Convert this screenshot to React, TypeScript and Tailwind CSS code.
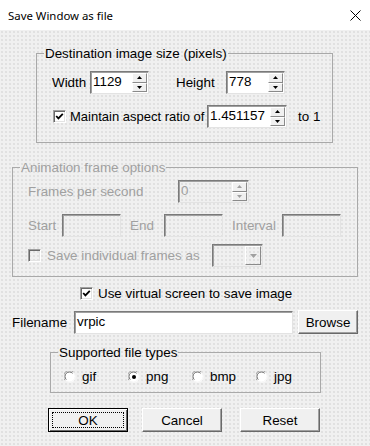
import type { ReactNode } from 'react'

const sunken =
  'border border-t-[#7a7a7a] border-l-[#7a7a7a] border-r-[#e3e3e3] border-b-[#e3e3e3] shadow-[inset_1px_1px_0_#a0a0a0]'

function SpinButton({ up, disabled }: { up?: boolean; disabled?: boolean }) {
  return (
    <div className="flex-1 flex items-center justify-center bg-[#f0f0f0] border border-t-white border-l-white border-r-[#8a8a8a] border-b-[#8a8a8a]">
      <svg width="5" height="3" viewBox="0 0 5 3">
        <path
          d={up ? 'M2.5 0 L5 3 L0 3 Z' : 'M0 0 L5 0 L2.5 3 Z'}
          fill={disabled ? '#a0a0a0' : '#000'}
        />
      </svg>
    </div>
  )
}

function SpinBox({ value, className, disabled }: { value: string; className: string; disabled?: boolean }) {
  return (
    <div className={`flex shrink-0 h-[23px] ${sunken} ${disabled ? '' : 'bg-white'} ${className}`}>
      <span className={`flex-1 pl-[2px] pt-[2px] leading-[16px] ${disabled ? 'text-[#a0a0a0]' : 'text-black'}`}>
        {value}
      </span>
      <div className="flex flex-col w-[16px] py-[1px] pr-[1px]">
        <SpinButton up disabled={disabled} />
        <SpinButton disabled={disabled} />
      </div>
    </div>
  )
}

function TextBox({ value, className, disabled }: { value?: string; className: string; disabled?: boolean }) {
  return (
    <div className={`flex shrink-0 items-center h-[23px] ${sunken} ${disabled ? '' : 'bg-white'} ${className}`}>
      <span className="pl-[2px] leading-[16px] text-black">{value}</span>
    </div>
  )
}

function Checkbox({ checked, disabled }: { checked?: boolean; disabled?: boolean }) {
  return (
    <div
      className={`w-[13px] h-[13px] shrink-0 flex items-center justify-center ${
        disabled ? 'bg-transparent' : 'bg-white'
      } border border-t-[#a0a0a0] border-l-[#a0a0a0] border-r-white border-b-white shadow-[inset_1px_1px_0_#696969,inset_-1px_-1px_0_#e3e3e3]`}
    >
      {checked && (
        <svg width="9" height="9" viewBox="0 0 9 9">
          <polyline points="1.2,4 3.4,6.4 7.8,1.8" fill="none" stroke="#000" strokeWidth="1.8" />
        </svg>
      )}
    </div>
  )
}

function Radio({ checked }: { checked?: boolean }) {
  return (
    <svg width="12" height="12" viewBox="0 0 12 12" className="shrink-0">
      <circle cx="6" cy="6" r="5.5" fill="#fff" />
      <path d="M1.2 9.4 A5.2 5.2 0 0 1 9.4 1.2" fill="none" stroke="#a0a0a0" strokeWidth="1" />
      <path d="M2.3 8.6 A4.2 4.2 0 0 1 8.6 2.3" fill="none" stroke="#696969" strokeWidth="1" />
      <path d="M9.4 1.2 A5.2 5.2 0 0 1 1.2 9.4" fill="none" stroke="#f4f4f4" strokeWidth="1" />
      {checked && <circle cx="6" cy="6" r="2" fill="#000" />}
    </svg>
  )
}

function Button({ children, className, isDefault }: { children: ReactNode; className: string; isDefault?: boolean }) {
  if (isDefault) {
    return (
      <div className={`h-[24px] shrink-0 flex p-[3px] bg-[#f0f0f0] border border-black shadow-[inset_1px_1px_0_#fff,inset_-1px_-1px_0_#696969] ${className}`}>
        <div className="flex-1 flex items-center justify-center border border-dotted border-black">{children}</div>
      </div>
    )
  }
  return (
    <div
      className={`h-[24px] shrink-0 flex items-center justify-center bg-[#f0f0f0] border border-t-white border-l-white border-r-[#696969] border-b-[#696969] shadow-[inset_-1px_-1px_0_#a0a0a0] ${className}`}
    >
      {children}
    </div>
  )
}

function Group({ label, disabled, className, children }: { label: string; disabled?: boolean; className: string; children: ReactNode }) {
  return (
    <fieldset className={`border border-[#a9a9a9] ${className}`}>
      <legend className={`ml-[7px] px-[1px] leading-[15px] ${disabled ? 'text-[#a0a0a0]' : 'text-black'}`}>{label}</legend>
      {children}
    </fieldset>
  )
}

export default function App() {
  return (
    <div className="w-[370px] h-[446px] flex flex-col whitespace-nowrap text-[13.4px] leading-[15px] font-['Liberation_Sans',Arial,sans-serif] text-black">
      <div className="h-[30px] flex items-center justify-between bg-white pl-[8px] pr-[9px] font-['Noto_Sans','Open_Sans',sans-serif] text-[11.4px]">
        <span>Save Window as file</span>
        <svg width="11" height="11" viewBox="0 0 11 11">
          <path d="M0.5 0.5 L10.5 10.5 M10.5 0.5 L0.5 10.5" stroke="#000" strokeWidth="1" />
        </svg>
      </div>

      <div className="flex-1 flex flex-col bg-[#f0f0f0] bg-[image:radial-gradient(circle,#e0e0e0_0.7px,transparent_1px)] bg-[length:4px_4px]">
        <Group label="Destination image size (pixels)" className="ml-[36px] mt-[16px] w-[297px] h-[97px]">
          <div className="flex items-center mt-[10px] pl-[15px]">
            <span className="w-[38px] shrink-0">Width</span>
            <SpinBox value="1129" className="w-[59px]" />
            <span className="w-[50px] shrink-0 ml-[27px]">Height</span>
            <SpinBox value="778" className="w-[59px]" />
          </div>
          <div className="flex items-center mt-[11px] pl-[16px]">
            <Checkbox checked />
            <span className="w-[141px] shrink-0 pl-[4px] text-[13px]">Maintain aspect ratio of</span>
            <SpinBox value="1.451157" className="w-[80px]" />
            <span className="ml-[11px]">to 1</span>
          </div>
        </Group>

        <Group label="Animation frame options" disabled className="ml-[12px] mt-[17px] w-[346px] h-[117px] text-[#a0a0a0]">
          <div className="flex items-center mt-[5px] pl-[15px]">
            <span className="w-[150px] shrink-0">Frames per second</span>
            <SpinBox value="0" disabled className="w-[71px]" />
          </div>
          <div className="flex items-center mt-[11px] pl-[15px]">
            <span className="w-[34px] shrink-0">Start</span>
            <TextBox disabled className="w-[59px]" />
            <span className="w-[34px] shrink-0 ml-[9px]">End</span>
            <TextBox disabled className="w-[59px]" />
            <span className="w-[50px] shrink-0 ml-[9px]">Interval</span>
            <TextBox disabled className="w-[59px]" />
          </div>
          <div className="flex items-center mt-[7px] pl-[15px]">
            <Checkbox disabled />
            <span className="w-[171px] shrink-0 pl-[6px]">Save individual frames as</span>
            <div className={`flex shrink-0 h-[23px] w-[51px] ${sunken}`}>
              <div className="flex-1" />
              <div className="w-[16px] my-[1px] mr-[1px] flex items-center justify-center border border-t-white border-l-white border-r-[#8a8a8a] border-b-[#8a8a8a]">
                <svg width="7" height="4" viewBox="0 0 7 4">
                  <path d="M0 0 L7 0 L3.5 4 Z" fill="#a0a0a0" />
                </svg>
              </div>
            </div>
          </div>
        </Group>

        <div className="flex items-center mt-[9px] ml-[80px]">
          <Checkbox checked />
          <span className="pl-[5px]">Use virtual screen to save image</span>
        </div>

        <div className="flex items-center mt-[9px] pl-[12px]">
          <span className="w-[62px] shrink-0">Filename</span>
          <TextBox value="vrpic" className="w-[219px]" />
          <Button className="w-[60px] ml-[5px]">Browse</Button>
        </div>

        <Group label="Supported file types" className="ml-[50px] mt-[11px] w-[270px] h-[48px]">
          <div className="flex items-center mt-[9px] pl-[13px]">
            {[
              { label: 'gif', checked: false },
              { label: 'png', checked: true },
              { label: 'bmp', checked: false },
              { label: 'jpg', checked: false },
            ].map((t) => (
              <div key={t.label} className="w-[64px] shrink-0 flex items-center gap-[6px]">
                <Radio checked={t.checked} />
                <span>{t.label}</span>
              </div>
            ))}
          </div>
        </Group>

        <div className="flex mt-[15px] ml-[48px]">
          <Button isDefault className="w-[80px]">OK</Button>
          <Button className="w-[80px] ml-[14px]">Cancel</Button>
          <Button className="w-[80px] ml-[18px]">Reset</Button>
        </div>
      </div>
    </div>
  )
}
